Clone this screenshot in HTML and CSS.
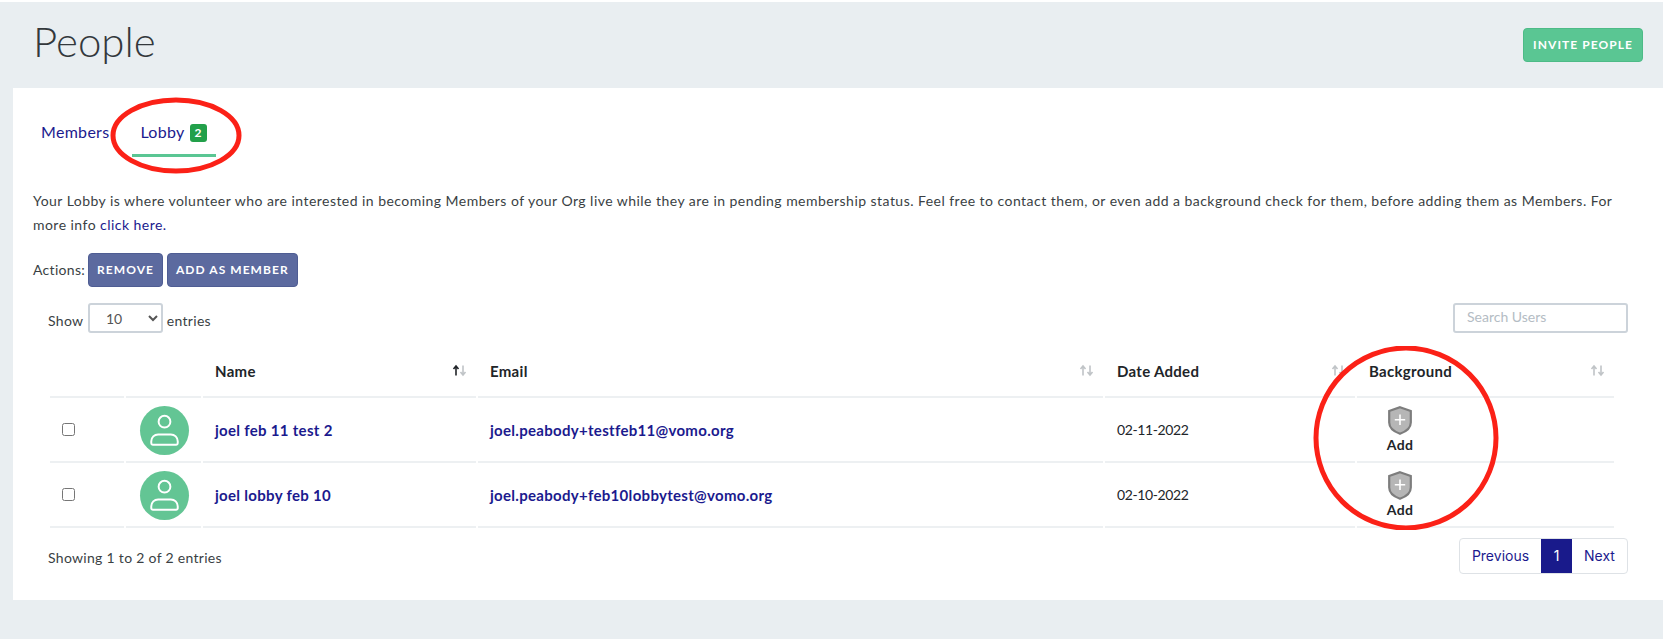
FILE: index.html
```html
<!DOCTYPE html>
<html lang="en">
<head>
<meta charset="UTF-8">
<meta name="viewport" content="width=device-width, initial-scale=1.0">
<title>People</title>
<link rel="stylesheet" href="styles.css">
</head>
<body>
    <!-- Page header -->
    <div class="page-header">
        <h1>People</h1>
        <a class="btn btn-green" href="#">Invite People</a>
    </div>

    <div class="card">
        <!-- Tabs -->
        <div class="tabs">
            <a class="tab" href="#">Members</a>
            <a class="tab active" href="#">Lobby <span class="badge">2</span></a>
        </div>

        <p class="intro">Your Lobby is where volunteer who are interested in becoming Members of your Org live while they are in pending membership status. Feel free to contact them, or even add a background check for them, before adding them as Members. For more info <a href="#">click here.</a></p>

        <div class="actions">
            <span class="actions-label">Actions:</span>
            <a class="btn btn-blue" href="#">Remove</a>
            <a class="btn btn-blue" href="#">Add as Member</a>
        </div>

        <div class="table-top">
            <label class="show">Show
                <select>
                    <option>10</option>
                    <option>25</option>
                    <option>50</option>
                </select>
                entries
            </label>
            <input class="search" type="text" placeholder="Search Users">
        </div>

        <table>
            <thead>
                <tr>
                    <th class="col-check"></th>
                    <th class="col-avatar"></th>
                    <th class="col-name">Name
                        <svg class="sort" viewBox="0 0 16 12"><path class="on" d="M4 11V2M1.5 4.500 4 1.500l2.500 3"/><path d="M11 1v9M8.500 7.500l2.500 3 2.500-3"/></svg>
                    </th>
                    <th class="col-email">Email
                        <svg class="sort" viewBox="0 0 16 12"><path d="M4 11V2M1.5 4.500 4 1.500l2.500 3"/><path d="M11 1v9M8.500 7.500l2.500 3 2.500-3"/></svg>
                    </th>
                    <th class="col-date">Date Added
                        <svg class="sort" viewBox="0 0 16 12"><path d="M4 11V2M1.5 4.500 4 1.500l2.500 3"/><path d="M11 1v9M8.500 7.500l2.500 3 2.500-3"/></svg>
                    </th>
                    <th class="col-bg">Background
                        <svg class="sort" viewBox="0 0 16 12"><path d="M4 11V2M1.5 4.500 4 1.500l2.500 3"/><path d="M11 1v9M8.500 7.500l2.500 3 2.500-3"/></svg>
                    </th>
                </tr>
            </thead>
            <tbody>
                <tr>
                    <td><input type="checkbox"></td>
                    <td>
                        <span class="avatar">
                            <svg viewBox="0 0 50 50"><circle cx="25" cy="16" r="6"/><path d="M13 39.500h24a1.500 1.500 0 0 0 1.500-1.500v-2a7 7 0 0 0-7-7H18.500a7 7 0 0 0-7 7v2a1.500 1.500 0 0 0 1.500 1.500z"/></svg>
                        </span>
                    </td>
                    <td><a class="strong" href="#">joel feb 11 test 2</a></td>
                    <td><a class="strong" href="#">joel.peabody+testfeb11@vomo.org</a></td>
                    <td class="date">02-11-2022</td>
                    <td>
                        <a class="add-check" href="#">
                            <svg viewBox="0 0 24 29"><path class="shield" d="M12 1.200 22.800 5v11.500c0 5.200-5 9.200-10.800 11.300C6.200 25.700 1.200 21.700 1.200 16.500V5z"/><path class="plus" d="M12 8.500v10.500M6.800 13.700h10.400"/></svg>
                            Add
                        </a>
                    </td>
                </tr>
                <tr>
                    <td><input type="checkbox"></td>
                    <td>
                        <span class="avatar">
                            <svg viewBox="0 0 50 50"><circle cx="25" cy="16" r="6"/><path d="M13 39.500h24a1.500 1.500 0 0 0 1.500-1.500v-2a7 7 0 0 0-7-7H18.500a7 7 0 0 0-7 7v2a1.500 1.500 0 0 0 1.500 1.500z"/></svg>
                        </span>
                    </td>
                    <td><a class="strong" href="#">joel lobby feb 10</a></td>
                    <td><a class="strong" href="#">joel.peabody+feb10lobbytest@vomo.org</a></td>
                    <td class="date">02-10-2022</td>
                    <td>
                        <a class="add-check" href="#">
                            <svg viewBox="0 0 24 29"><path class="shield" d="M12 1.200 22.800 5v11.500c0 5.200-5 9.200-10.800 11.300C6.200 25.700 1.200 21.700 1.200 16.500V5z"/><path class="plus" d="M12 8.500v10.500M6.800 13.700h10.400"/></svg>
                            Add
                        </a>
                    </td>
                </tr>
            </tbody>
        </table>

        <div class="table-bottom">
            <span class="info">Showing 1 to 2 of 2 entries</span>
            <div class="pagination">
                <a class="prev" href="#">Previous</a>
                <a class="current" href="#">1</a>
                <a class="next" href="#">Next</a>
            </div>
        </div>

        <!-- Red hand drawn marks on top of the screenshot -->
        <svg class="mark mark-tab" viewBox="0 0 132 77"><ellipse cx="66" cy="38.500" rx="63" ry="35.500"/></svg>
        <svg class="mark mark-bg" viewBox="0 0 186 184"><circle cx="93" cy="92" r="90"/></svg>
    </div>
</body>
</html>
```

FILE: styles.css
```css
* {
    box-sizing: border-box;
}
body {
    font-family: Lato, "Open Sans", sans-serif;
    font-size: 14px;
    letter-spacing: 0.3px;
    color: #3a3f44;
    background-color: #e9eef1;
    margin: 0;
    padding-top: 2px;
    min-height: 100vh;
    background-image: linear-gradient(#fff, #fff);
    background-size: 100% 2px;
    background-repeat: no-repeat;
}
a {
    color: #1b1a8e;
    text-decoration: none;
}
.page-header {
    height: 86px;
    display: flex;
    justify-content: space-between;
    align-items: center;
    padding: 0 20px 4px 33px;
}
.page-header h1 {
    margin: 0 0 4px;
    font-size: 42px;
    font-weight: 300;
    letter-spacing: 0;
    color: #33383c;
}
.btn {
    display: inline-block;
    font-size: 12px;
    font-weight: 700;
    letter-spacing: 1.05px;
    text-transform: uppercase;
    color: #fff;
    border-radius: 4px;
    text-align: center;
}
.btn-green {
    width: 120px;
    height: 34px;
    line-height: 32px;
    background-color: #5ac693;
    border: 1px solid #4dbb87;
    margin-top: 4px;
}
.btn-blue {
    height: 34px;
    line-height: 32px;
    padding: 0 8px;
    background-color: #5c6a9f;
    border: 1px solid #4f5d93;
}
.card {
    position: relative;
    margin-left: 13px;
    height: 512px;
    padding: 0 20px;
    background-color: #fff;
}
.tabs {
    display: flex;
    padding-top: 27px;
}
.tab {
    height: 42px;
    font-size: 16px;
    line-height: 34px;
    padding: 0 8px;
    border-bottom: 3px solid transparent;
}
.tab.active {
    width: 84px;
    margin-left: 15px;
    white-space: nowrap;
    border-bottom-color: #5ac693;
}
.badge {
    display: inline-block;
    width: 17px;
    height: 18px;
    margin-left: 1px;
    line-height: 18px;
    font-size: 12px;
    font-weight: 700;
    color: #fff;
    text-align: center;
    background-color: #22a04a;
    border-radius: 3px;
    vertical-align: 1px;
}
.intro {
    margin: 32px 0 0;
    line-height: 24px;
    letter-spacing: 0.46px;
}
.actions {
    display: flex;
    align-items: center;
    gap: 4px;
    margin-top: 16px;
}
.actions-label {
    margin: 0 -1px 2px 0;
}
.table-top {
    display: flex;
    justify-content: space-between;
    align-items: flex-start;
    height: 31px;
    margin-top: 16px;
    padding: 0 15px;
}
.show select {
    width: 75px;
    height: 30px;
    margin: 0 0 0 1px;
    padding-left: 12px;
    vertical-align: 2px;
    font-family: inherit;
    font-size: 14px;
    color: #555;
    background-color: #fff;
    border: 2px solid #ccd3da;
    border-radius: 3px;
}
.search {
    width: 175px;
    height: 30px;
    padding: 0 12px 3px;
    font-family: inherit;
    font-size: 14px;
    border: 2px solid #ccd3da;
    border-radius: 3px;
}
.search::placeholder {
    color: #b4bcc4;
}
table {
    width: 1568px;
    margin: 11px 0 0 15px;
    border-collapse: separate;
    border-spacing: 2px 0;
    table-layout: fixed;
}
th {
    position: relative;
    height: 53px;
    padding: 1px 12px 0;
    text-align: left;
    font-size: 15px;
    font-weight: 700;
    color: #212529;
    border-bottom: 2px solid #edf0f2;
}
td {
    height: 65px;
    padding: 0 12px;
    color: #212529;
    border-bottom: 2px solid #edf0f2;
}
.col-check {
    width: 74px;
}
.col-avatar {
    width: 75px;
}
.col-name {
    width: 273px;
}
.col-email {
    width: 625px;
}
.col-date {
    width: 250px;
}
.sort {
    position: absolute;
    right: 8px;
    top: 19px;
    width: 16px;
    height: 13px;
}
.sort path {
    fill: none;
    stroke: #c0c4c7;
    stroke-width: 1.6;
}
.sort path.on {
    stroke: #212529;
}
td input[type="checkbox"] {
    display: block;
    width: 13px;
    height: 13px;
    margin: 0;
}
.avatar {
    display: block;
    width: 49px;
    height: 49px;
    margin: 2px 0 0 1.5px;
    background-color: #63c594;
    border-radius: 50%;
}
.avatar svg {
    display: block;
    width: 49px;
    height: 49px;
}
.avatar circle, .avatar path {
    fill: none;
    stroke: #fff;
    stroke-width: 2;
}
.strong {
    font-size: 15px;
    font-weight: 700;
    letter-spacing: 0.3px;
}
.date {
    letter-spacing: -0.4px;
}
.add-check {
    display: flex;
    flex-direction: column;
    align-items: center;
    width: 62px;
    font-size: 14px;
    font-weight: 700;
    color: #212529;
    line-height: 16px;
}
.add-check svg {
    width: 24px;
    height: 29px;
    margin-bottom: 2px;
}
.shield {
    fill: #b6b6b6;
    stroke: #7d7d7d;
    stroke-width: 2.2;
}
.plus {
    fill: none;
    stroke: #fff;
    stroke-width: 1.6;
}
.table-bottom {
    display: flex;
    justify-content: space-between;
    align-items: center;
    margin-top: 10px;
    padding: 0 15px;
}
.info {
    margin-top: 3px;
}
.pagination {
    display: flex;
    height: 36px;
    border: 1px solid #dee2e6;
    border-radius: 4px;
    overflow: hidden;
    font-family: Inter, sans-serif;
    letter-spacing: 0;
}
.pagination a {
    line-height: 34px;
    text-align: center;
}
.pagination .prev {
    width: 81px;
}
.pagination .next {
    width: 55px;
}
.pagination a.current {
    width: 31px;
    color: #fff;
    background-color: #191a8b;
}
.mark {
    position: absolute;
    fill: none;
    stroke: #fb2117;
    stroke-width: 5;
}
.mark-tab {
    left: 97px;
    top: 9px;
    width: 132px;
    height: 77px;
}
.mark-bg {
    left: 1300px;
    top: 258px;
    width: 186px;
    height: 184px;
}
```
